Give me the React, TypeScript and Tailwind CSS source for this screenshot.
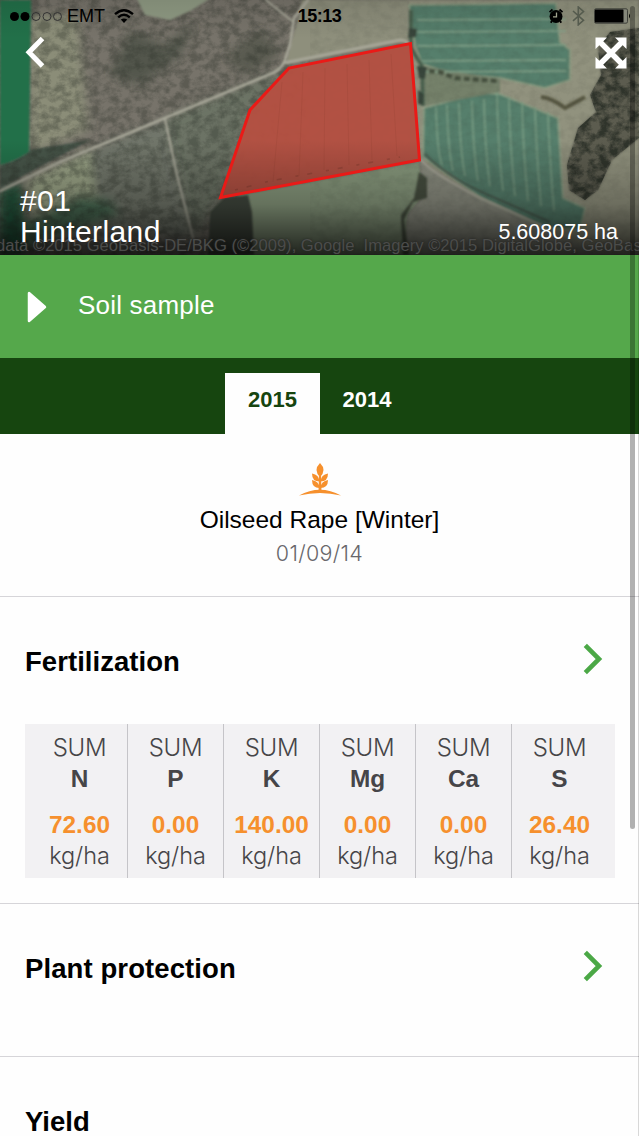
import React from "react";

interface Nutrient {
  symbol: string;
  amount: string;
}

const nutrients: Nutrient[] = [
  { symbol: "N", amount: "72.60" },
  { symbol: "P", amount: "0.00" },
  { symbol: "K", amount: "140.00" },
  { symbol: "Mg", amount: "0.00" },
  { symbol: "Ca", amount: "0.00" },
  { symbol: "S", amount: "26.40" },
];

const rowLines = [20, 32, 46, 61, 72];
const columnLines = [436, 447, 459, 472, 484, 497, 509, 522, 535, 548];

const FieldMap = () => (
  <svg className="block h-[255px] w-full" viewBox="0 0 639 255" preserveAspectRatio="none">
    <defs>
      <filter id="grain" x="0" y="0" width="100%" height="100%" colorInterpolationFilters="sRGB">
        <feTurbulence type="fractalNoise" baseFrequency="0.1 0.13" numOctaves="5" seed="4" />
        <feColorMatrix values="0 0 0 0 0.16  0 0 0 0 0.18  0 0 0 0 0.15  2.8 0 0 0 -1" />
      </filter>
      <filter id="soft" x="-20%" y="-20%" width="140%" height="140%">
        <feGaussianBlur stdDeviation="5" />
      </filter>
      <filter id="edge" x="-5%" y="-5%" width="110%" height="110%">
        <feGaussianBlur stdDeviation="0.8" />
      </filter>
      <linearGradient id="shade" x1="0" y1="0" x2="0" y2="1">
        <stop offset="0" stopColor="#000" stopOpacity="0.1" />
        <stop offset="0.15" stopColor="#000" stopOpacity="0" />
        <stop offset="0.55" stopColor="#000" stopOpacity="0" />
        <stop offset="0.8" stopColor="#000" stopOpacity="0.25" />
        <stop offset="1" stopColor="#000" stopOpacity="0.76" />
      </linearGradient>
    </defs>

    {/* ground */}
    <rect width="639" height="255" fill="#77736a" />
    <g filter="url(#soft)">
      <path d="M30 15H78L84 80 88 130 30 155Z" fill="#8b8d78" />
      <path d="M165 118L285 70 250 110 220 198 193 240Z" fill="#6c7365" />
      <path d="M28 180L90 150 98 200 30 215Z" fill="#99a285" />
      <path d="M90 150L165 120 192 240 100 230Z" fill="#71766a" />
      <path d="M20 225L80 195 110 200 120 215 0 255Z" fill="#4a6b52" />
      <path d="M0 190L22 183 26 255H0Z" fill="#24583c" />
      <path d="M130 30L165 45 195 22 180 55 140 85 110 75Z" fill="#4b4f44" opacity="0.8" />
      <path d="M225 55L262 30 280 55 245 75Z" fill="#4f5248" opacity="0.75" />
    </g>
    <path d="M0 165Q20 160 29 150L90 140 30 172 0 188Z" fill="#46554a" filter="url(#edge)" />
    <rect width="310" height="255" filter="url(#grain)" opacity="0.34" />
    <path d="M135 -5H215L192 10 170 20 145 15Z" fill="#8f9a83" filter="url(#edge)" />
    <path d="M0 0H31L29 152Q14 162 0 165Z" fill="#226f49" filter="url(#edge)" />

    {/* ground around the marked field */}
    <path d="M302 0H408L412 40 286 64 292 40 298 20Z" fill="#8e8f7c" filter="url(#edge)" />
    <path d="M238 195L419 162 424 195 408 215 404 255H250Z" fill="#87987b" filter="url(#edge)" />
    <path d="M408 0H639V255H545L420 160Z" fill="#91927e" filter="url(#edge)" />
    <path d="M420 162L480 198 548 228 600 255H404L408 215 424 195Z" fill="#8b8d80" filter="url(#edge)" />
    <path d="M224 198L248 195 252 212 254 255H208L210 212Z" fill="#3f463c" filter="url(#edge)" />
    <path d="M419 172L427 178 427 198 413 202 404 220 409 255H403L401 215 414 198Z" fill="#464f41" filter="url(#edge)" />

    {/* neighbouring fields */}
    <g filter="url(#edge)">
      <path d="M409 5L556 3 560 42 570 50 570 80 545 88 500 78 450 73 422 64 415 45Z" fill="#577f6c" stroke="#8c9d83" strokeWidth="1.600" />
      <path d="M424 108L480 93 500 94 558 118 563 198 585 208 580 230 545 228 480 197 423 157Z" fill="#567f6c" stroke="#8c9f85" strokeWidth="1.600" />
      <path d="M422 66L500 79 500 92 424 106Z" fill="#74816b" />
      {rowLines.map((y) => (
        <path key={y} d={`M417 ${y}L566 ${y - 1}`} stroke="#85a58c" strokeWidth="1.400" />
      ))}
      {columnLines.map((x, i) => (
        <path
          key={x}
          d={`M${x} ${x < 490 ? 107 - i * 2 : 92 + (i - 5) * 5}Q${x + 1} 150 ${x + 6} ${166 + i * 5}`}
          stroke="#7fa388"
          strokeWidth="1.300"
          fill="none"
        />
      ))}
      <path d="M420 70L440 72 455 78 497 81" stroke="#46513f" strokeWidth="4.500" strokeDasharray="6 3" fill="none" />
      <path d="M411 10V48L422 66 423 106" stroke="#4c6250" strokeWidth="4" fill="none" />
      <path d="M409 28L417 29 416 37 408 38ZM417 66L427 67 425 79 419 78ZM418 90L424 94 423 105 418 104Z" fill="#37453a" />
      <path d="M541 97Q552 98 565 108L585 97" stroke="#55543f" strokeWidth="4" fill="none" />
      <path d="M639 28L610 32 598 48 601 75 590 95 596 112 578 128 567 165 569 190 585 200 598 190 612 160 639 138Z" fill="#5b5b50" />
    </g>
    <svg x="567" y="28" width="72" height="172" viewBox="567 28 72 172">
      <defs>
        <clipPath id="wood">
          <path d="M639 28L610 32 598 48 601 75 590 95 596 112 578 128 567 165 569 190 585 200 598 190 612 160 639 138Z" />
        </clipPath>
      </defs>
      <g clipPath="url(#wood)">
        <rect x="560" y="20" width="80" height="190" filter="url(#grain)" opacity="0.85" />
      </g>
    </svg>
    <rect x="310" width="329" height="255" filter="url(#grain)" opacity="0.07" />

    {/* roads */}
    <g fill="none" stroke="#a8a799" strokeLinecap="round" filter="url(#edge)">
      <path d="M308 0L294 18 290 45 285 60Q281 71 268 75L165 118 60 162 0 191" strokeWidth="2.800" />
      <path d="M284 63L319 56 395 41Q404 39 408 43" strokeWidth="3" />
      <path d="M266 0L292 21" strokeWidth="1.800" />
      <path d="M165 119L177 175 193 238" strokeWidth="2.200" />
      <path d="M421 160Q432 173 480 198L545 227" strokeWidth="2.400" />
    </g>
    <path d="M425 154Q450 180 500 200L550 222" stroke="#465449" strokeWidth="1.800" fill="none" filter="url(#edge)" />

    {/* marked field */}
    <path d="M410.500 43.500L419.500 160 220.500 197.500 250 110 289 68Z" fill="#b45042" fillOpacity="0.96" />
    <g stroke="#944233" strokeWidth="1" opacity="0.25">
      <path d="M282 82L273 182M303 72L299 176M325 68L324 170M347 64L349 165M369 60L372 160M391 54L397 156" />
    </g>
    <path d="M235 190L270 181 330 170 400 157" stroke="#7c3a2e" strokeWidth="1.600" strokeDasharray="3 9 5 14" opacity="0.4" fill="none" />
    <rect width="639" height="255" fill="url(#shade)" />
    <path d="M410.500 43.500L419.500 160 220.500 197.500 250 110 289 68Z" fill="none" stroke="#ea1a17" strokeWidth="3" />
  </svg>
);

const StatusBar = () => (
  <div className="absolute inset-x-0 top-0 grid h-8 grid-cols-3 items-center text-black">
    <div className="flex items-center pl-[10px]">
      <svg width="53" height="11" viewBox="0 0 53 11">
        <circle cx="4.500" cy="5.500" r="4.500" />
        <circle cx="15" cy="5.500" r="4.500" />
        <g fill="none" stroke="#333" strokeWidth="1">
          <circle cx="26" cy="5.500" r="4" />
          <circle cx="37" cy="5.500" r="4" />
          <circle cx="47.500" cy="5.500" r="4" />
        </g>
      </svg>
      <span className="ml-[4px] text-[18px] leading-none">EMT</span>
      <svg className="ml-[9px] -mt-[1px]" width="20" height="14" viewBox="0 0 20 14">
        <path d="M10 14L6.800 10.600Q10 8.300 13.200 10.600Z" />
        <path d="M1 5.200Q10 -2.800 19 5.200M4.200 8.300Q10 3.200 15.800 8.300" fill="none" stroke="#000" strokeWidth="2.300" />
      </svg>
    </div>
    <div className="text-center text-[18px] leading-none font-bold tracking-[-0.5px]">15:13</div>
    <div className="flex items-center justify-end pr-[7px]">
      <svg width="16" height="16" viewBox="0 0 16 16">
        <circle cx="8" cy="8.500" r="6.500" />
        <path d="M1.500 4.200L4.500 1.500M14.500 4.200L11.500 1.500M3.800 13L2.800 14.700M12.200 13L13.200 14.700" stroke="#000" strokeWidth="1.800" />
        <path d="M8.500 4.500V8.800H5" fill="none" stroke="#a2a590" strokeWidth="1.300" />
      </svg>
      <svg className="ml-[8px]" width="13" height="20" viewBox="0 0 13 20">
        <path d="M1 5L11.500 14.300 6.300 18.800V1L11.500 5.500 1 14.800" fill="none" stroke="#555b4e" strokeWidth="1.600" />
      </svg>
      <svg className="ml-[9px] mr-[1px]" width="37" height="16" viewBox="0 0 37 16">
        <rect x="0.500" y="0.800" width="33" height="14.400" rx="1.500" fill="#85877a" stroke="#3f413a" />
        <rect x="1" y="1.500" width="28.500" height="13" rx="0.500" />
        <path d="M35 5.500Q37 8 35 10.500Z" />
      </svg>
    </div>
  </div>
);

const Chevron = () => (
  <svg width="20" height="32" viewBox="0 0 20 32">
    <path d="M2.300 2.300L16 16 2.300 29.700" fill="none" stroke="#4ba846" strokeWidth="4.600" />
  </svg>
);

const Header = () => (
  <div className="relative h-[255px] overflow-hidden">
    <FieldMap />
    <p className="absolute top-[236px] -left-[4px] text-[16.600px] leading-[20px] whitespace-pre text-[#4b4c4a] [text-shadow:0_0_2px_#222]">
      data ©2015 GeoBasis-DE/BKG (©2009), Google  Imagery ©2015 DigitalGlobe, GeoBasi
    </p>
    <StatusBar />
    <svg className="absolute top-[36px] left-[25px]" width="22" height="32" viewBox="0 0 22 32">
      <path d="M17.500 2.500L4 16.300 17.500 30" fill="none" stroke="#fff" strokeWidth="5" />
    </svg>
    <svg className="absolute top-[37px] left-[595px]" width="32" height="32" viewBox="0 0 32 32">
      <path d="M5 5L27 27M27 5L5 27" stroke="#fff" strokeWidth="5.400" />
      <path d="M0.500 0.500H12L0.500 12ZM31.500 0.500H20L31.500 12ZM0.500 31.500H12L0.500 20ZM31.500 31.500H20L31.500 20Z" fill="#fff" />
    </svg>
    <div className="absolute inset-x-0 bottom-[8px] flex items-end justify-between pr-[21px] pl-[20px] text-white">
      <h1 className="text-[30px] leading-[30.5px] tracking-[0.4px]">
        #01
        <br />
        Hinterland
      </h1>
      <span className="mb-[3px] text-[21.5px] leading-[24px]">5.608075 ha</span>
    </div>
  </div>
);

const App = () => {
  return (
    <div className="relative h-[1136px] w-full overflow-hidden bg-[#fefefe] font-['Liberation_Sans',Arial,sans-serif] text-black">
      <Header />

      <div className="flex h-[103px] items-start bg-[#55a84b] pt-[35px] pl-[27px] text-white">
        <svg className="mt-[1px]" width="20" height="32" viewBox="0 0 20 32">
          <path d="M2 2V30L18 16Z" fill="#fff" stroke="#fff" strokeWidth="2.500" strokeLinejoin="round" />
        </svg>
        <span className="ml-[31px] text-[26px] leading-[30px] tracking-[0.2px]">Soil sample</span>
      </div>

      <div className="flex h-[76px] items-end bg-[#16450f] pl-[225px] text-[22px] font-bold">
        <div className="h-[61px] w-[95px] bg-[#fefefe] pt-[14px] text-center leading-[26px] text-[#16450f]">2015</div>
        <div className="h-[61px] w-[94px] pt-[14px] text-center leading-[26px] text-white">2014</div>
      </div>

      <section className="flex h-[163px] flex-col items-center border-b border-[#d6d5d9] pt-[29px]">
        <svg width="42" height="33" viewBox="0 0 42 33" fill="#f6902d">
          <path d="M0 32.500Q21 21 42 32.500Q21 27.500 0 32.500Z" />
          <path d="M20 10H22L22.500 29H19.500Z" />
          <path d="M21 0Q28 7 21 14 14 7 21 0Z" />
          <path d="M20.500 18.500Q13 18.500 13 10.500 20 11.500 20.500 18.500ZM21.500 18.500Q29 18.500 29 10.500 22 11.500 21.500 18.500Z" />
          <path d="M20.500 25Q13 25 13 17 20 18 20.500 25ZM21.500 25Q29 25 29 17 22 18 21.500 25Z" />
        </svg>
        <p className="mt-[9px] text-[24.5px] leading-[30px]">Oilseed Rape [Winter]</p>
        <p className="mt-[5px] font-['Inter',sans-serif] text-[21.5px] leading-[26px] font-light tracking-[0.3px] text-[#68676b]">01/09/14</p>
      </section>

      <section className="h-[307px] border-b border-[#d6d5d9] px-[25px] pt-[46px]">
        <div className="flex items-start justify-between pr-[11px]">
          <h2 className="pt-[3px] text-[27.5px] leading-[32px] font-bold tracking-[0.05px]">Fertilization</h2>
          <Chevron />
        </div>
        <div className="mt-[46px] grid h-[154px] w-[590px] grid-cols-6 bg-[#f2f1f3] px-[7px]">
          {nutrients.map((item) => (
            <div
              key={item.symbol}
              className="border-r border-[#c5c4c8] pt-[8px] text-center text-[24.4px] leading-[31px] text-[#464548] last:border-transparent"
            >
              <p className="font-['Inter',sans-serif] text-[24px] leading-[31px] font-light tracking-[-0.3px]">SUM</p>
              <p className="font-bold">{item.symbol}</p>
              <p className="mt-[15px] font-bold text-[#f6902d]">{item.amount}</p>
              <p className="font-['Inter',sans-serif] text-[23.5px] leading-[31px] font-light tracking-[-0.1px]">kg/ha</p>
            </div>
          ))}
        </div>
      </section>

      <section className="flex h-[153px] items-start justify-between border-b border-[#d6d5d9] pt-[46px] pr-[36px] pl-[25px]">
        <h2 className="pt-[3px] text-[27.5px] leading-[32px] font-bold tracking-[0.1px]">Plant protection</h2>
        <Chevron />
      </section>

      <section className="px-[25px] pt-[49px]">
        <h2 className="text-[27.5px] leading-[32px] font-bold">Yield</h2>
      </section>

      {/* scroll indicator */}
      <div className="absolute top-[6px] right-[4px] h-[823px] w-[5px] rounded-full bg-black/30" />
      <div className="absolute top-[255px] right-0 bottom-0 w-px bg-black/15" />
    </div>
  );
};

export default App;
